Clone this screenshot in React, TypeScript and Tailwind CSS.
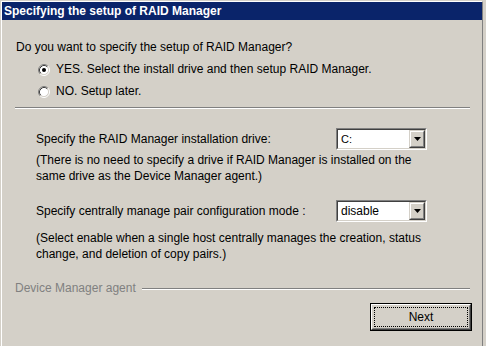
import React from "react";

function Radio({ checked }: { checked?: boolean }) {
  return (
    <svg width="12" height="12" viewBox="0 0 12 12" className="shrink-0">
      <circle cx="6" cy="6" r="4.5" fill="#ffffff" />
      <path d="M 2.11 9.89 A 5.5 5.5 0 0 1 9.89 2.11" fill="none" stroke="#808080" strokeWidth="1" />
      <path d="M 9.89 2.11 A 5.5 5.5 0 0 1 2.11 9.89" fill="none" stroke="#ffffff" strokeWidth="1" />
      <path d="M 2.82 9.18 A 4.5 4.5 0 0 1 9.18 2.82" fill="none" stroke="#404040" strokeWidth="1" />
      <path d="M 9.18 2.82 A 4.5 4.5 0 0 1 2.82 9.18" fill="none" stroke="#d4d0c8" strokeWidth="1" />
      {checked && <circle cx="6" cy="6" r="2" fill="#000000" />}
    </svg>
  );
}

function Select({ value, big }: { value: string; big?: boolean }) {
  return (
    <div className="w-[91px] h-[22px] border border-t-[#808080] border-l-[#808080] border-b-white border-r-white">
      <div className="h-full w-full border border-t-[#404040] border-l-[#404040] border-b-[#d4d0c8] border-r-[#d4d0c8] bg-white flex items-center">
        <span className={`flex-1 pl-[3px] text-black ${big ? "text-[12px]" : "text-[11px]"}`}>{value}</span>
        <div className="w-[16px] h-[18px] mr-0 border border-t-[#d4d0c8] border-l-[#d4d0c8] border-b-[#404040] border-r-[#404040]">
          <div className="h-full w-full border border-t-white border-l-white border-b-[#808080] border-r-[#808080] bg-[#d4d0c8] flex items-center justify-center">
            <svg width="7" height="4" viewBox="0 0 7 4">
              <path d="M0 0 H7 L3.5 4 Z" fill="#000" />
            </svg>
          </div>
        </div>
      </div>
    </div>
  );
}

export default function App() {
  return (
    <div className="w-[486px] h-[346px] bg-[#d4d0c8] overflow-hidden font-['Liberation_Sans',Arial,sans-serif] text-[12px] text-black">
      <div className="ml-[1px] mt-[1px] w-[482px] h-[345px] border-l border-t border-white border-r border-r-[#808080]">
        <div className="h-[18px] bg-[#0a246a] text-white font-bold text-[12px] leading-[18px] pl-[2px]">
          Specifying the setup of RAID Manager
        </div>
        <div className="flex flex-col">
          <div className="mt-[21px] ml-[14px] leading-[13px]">Do you want to specify the setup of RAID Manager?</div>
          <div className="mt-[9px] ml-[36px] flex items-center h-[13px] gap-[6px]">
            <Radio checked />
            <span className="leading-[13px]">YES. Select the install drive and then setup RAID Manager.</span>
          </div>
          <div className="mt-[9px] ml-[36px] flex items-center h-[13px] gap-[6px]">
            <Radio />
            <span className="leading-[13px]">NO. Setup later.</span>
          </div>
          <div className="mt-[9px] ml-[13px] w-[455px] border-t border-t-[#808080] border-b border-b-white" />
          <div className="mt-[19px] flex items-center h-[22px]">
            <span className="ml-[34px] w-[300px]">Specify the RAID Manager installation drive:</span>
            <Select value="C:" />
          </div>
          <div className="mt-[2px] ml-[34px] leading-[16px]">
            (There is no need to specify a drive if RAID Manager is installed on the
            <br />
            same drive as the Device Manager agent.)
          </div>
          <div className="mt-[16px] flex items-center h-[22px]">
            <span className="ml-[34px] w-[300px]">Specify centrally manage pair configuration mode :</span>
            <Select value="disable" big />
          </div>
          <div className="mt-[8px] ml-[34px] leading-[16px]">
            (Select enable when a single host centrally manages the creation, status
            <br />
            change, and deletion of copy pairs.)
          </div>
          <div className="mt-[20px] ml-[13px] w-[455px] flex items-center h-[13px] gap-[6px]">
            <span className="text-[#808080] leading-[13px] whitespace-nowrap">Device Manager agent</span>
            <div className="flex-1 border-t border-t-[#808080] border-b border-b-white" />
          </div>
          <div className="mt-[8px] flex justify-end pr-[10px]">
            <div className="w-[102px] h-[28px] border border-black">
              <div className="h-full w-full border border-t-white border-l-white border-b-[#404040] border-r-[#404040]">
                <div className="h-full w-full border border-t-[#d4d0c8] border-l-[#d4d0c8] border-b-[#808080] border-r-[#808080] p-[1px]">
                  <div className="h-full w-full border border-dotted border-black flex items-center justify-center">
                    Next
                  </div>
                </div>
              </div>
            </div>
          </div>
        </div>
      </div>
    </div>
  );
}
